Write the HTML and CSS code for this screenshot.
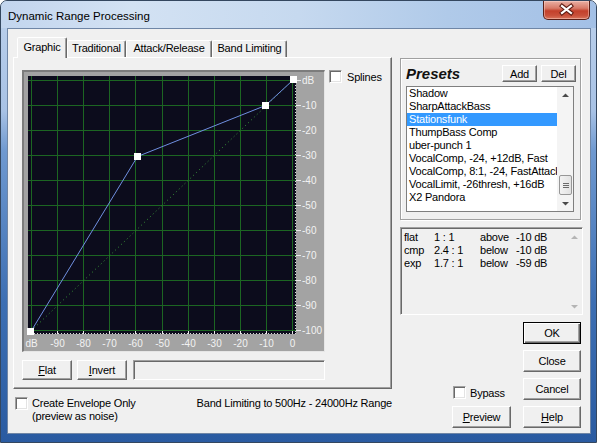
FILE: index.html
```html
<!DOCTYPE html>
<html>
<head>
    <title>Dynamic Range Processing</title>
    <link rel="stylesheet" href="styles.css">
</head>
<body>
<div class="window">
    <div class="titlebar">
        <div class="title">Dynamic Range Processing</div>
        <div class="close-btn">
            <svg width="45" height="17" viewBox="0 0 45 17">
                <path d="M18 5 L27 12 M27 5 L18 12" stroke="#5e1b12" stroke-width="4.2" stroke-linecap="square"/>
                <path d="M18 5 L27 12 M27 5 L18 12" stroke="#fff" stroke-width="2.2" stroke-linecap="square"/>
            </svg>
        </div>
    </div>
    <div class="frame">
        <div class="client">
            <div class="left">
                <div class="tabs">
                    <div class="tab active tab-graphic">Graphic</div>
                    <div class="tab tab-trad">Traditional</div>
                    <div class="tab tab-attack">Attack/Release</div>
                    <div class="tab tab-band">Band Limiting</div>
                </div>
                <div class="tab-panel">
                    <div class="graph-row">
                        <div class="graph">
                            <svg class="plot" width="300" height="279" viewBox="0 0 300 279">
                                <rect x="4" y="4" width="268" height="258" fill="#0c0c1c"/>
                                <!-- grid -->
                                <path stroke="#1c6622" stroke-width="1" fill="none"
                                      d="M7.5 4V262M33.5 4V262M59.5 4V262M85.5 4V262M111.5 4V262M138.5 4V262M164.5 4V262M190.5 4V262M216.5 4V262M242.5 4V262M268.5 4V262
                                         M4 8.5H272M4 33.5H272M4 58.5H272M4 83.5H272M4 108.5H272M4 133.5H272M4 158.5H272M4 183.5H272M4 208.5H272M4 233.5H272M4 258.5H272"/>
                                <!-- unity line -->
                                <path d="M7.5 258.5 L268.5 8.5" stroke="#3a9a3a" stroke-width="1" stroke-dasharray="1 3" fill="none"/>
                                <!-- scale ticks -->
                                <path d="M4 261.5H272M271.5 4V262" stroke="#d8d8d8" stroke-width="1" stroke-dasharray="1 2" fill="none"/>
                                <path stroke="#e8e8e8" stroke-width="1" fill="none"
                                      d="M7.5 259V262M33.5 259V262M59.5 259V262M85.5 259V262M111.5 259V262M138.5 259V262M164.5 259V262M190.5 259V262M216.5 259V262M242.5 259V262M268.5 259V262
                                         M272 8.5H277M272 33.5H277M272 58.5H277M272 83.5H277M272 108.5H277M272 133.5H277M272 158.5H277M272 183.5H277M272 208.5H277M272 233.5H277M272 258.5H277"/>
                                <!-- curve -->
                                <polyline points="7.5,258.5 113.5,84.5 241.5,33.5 268.5,8.5" stroke="#6f8fe0" stroke-width="1" fill="none"/>
                                <g fill="#fff">
                                    <rect x="3" y="256" width="7" height="7"/>
                                    <rect x="110" y="81" width="7" height="7"/>
                                    <rect x="238" y="30" width="7" height="7"/>
                                    <rect x="266" y="4" width="7" height="7"/>
                                </g>
                                <g class="axis-bottom" text-anchor="middle">
                                    <text x="7.5" y="275">dB</text>
                                    <text x="33.5" y="275">-90</text>
                                    <text x="59.5" y="275">-80</text>
                                    <text x="85.5" y="275">-70</text>
                                    <text x="111.5" y="275">-60</text>
                                    <text x="138.5" y="275">-50</text>
                                    <text x="164.5" y="275">-40</text>
                                    <text x="190.5" y="275">-30</text>
                                    <text x="216.5" y="275">-20</text>
                                    <text x="242.5" y="275">-10</text>
                                    <text x="268.5" y="275">0</text>
                                </g>
                                <g class="axis-right">
                                    <text x="278" y="12">dB</text>
                                    <text x="278" y="37">-10</text>
                                    <text x="278" y="62">-20</text>
                                    <text x="278" y="87">-30</text>
                                    <text x="278" y="112">-40</text>
                                    <text x="278" y="137">-50</text>
                                    <text x="278" y="162">-60</text>
                                    <text x="278" y="187">-70</text>
                                    <text x="278" y="212">-80</text>
                                    <text x="278" y="237">-90</text>
                                    <text x="278" y="262">-100</text>
                                </g>
                            </svg>
                        </div>
                        <div class="check splines">
                            <span class="box"></span>
                            <span>Splines</span>
                        </div>
                    </div>
                    <div class="graph-buttons">
                        <button class="btn btn-flat"><u>F</u>lat</button>
                        <button class="btn btn-invert"><u>I</u>nvert</button>
                        <div class="field"></div>
                    </div>
                </div>
                <div class="bottom-row">
                    <div class="check envelope">
                        <span class="box"></span>
                        <span class="envelope-text">Create Envelope Only<br>(preview as noise)</span>
                    </div>
                    <div class="band-text">Band Limiting to 500Hz - 24000Hz Range</div>
                </div>
            </div>

            <div class="right">
                <div class="presets">
                    <div class="presets-head">
                        <div class="presets-title">Presets</div>
                        <button class="btn small-btn">Add</button>
                        <button class="btn small-btn">Del</button>
                    </div>
                    <div class="listbox">
                        <div class="items">
                            <div class="item">Shadow</div>
                            <div class="item">SharpAttackBass</div>
                            <div class="item sel">Stationsfunk</div>
                            <div class="item">ThumpBass Comp</div>
                            <div class="item">uber-punch 1</div>
                            <div class="item">VocalComp, -24, +12dB, Fast</div>
                            <div class="item">VocalComp, 8:1, -24, FastAttack</div>
                            <div class="item">VocalLimit, -26thresh, +16dB</div>
                            <div class="item">X2 Pandora</div>
                        </div>
                        <div class="scroll">
                            <svg class="arrow" width="16" height="16"><polygon points="5,10 12,10 8.5,6.5" fill="#4a4a4a"/></svg>
                            <div class="track">
                                <div class="thumb"><span></span><span></span><span></span></div>
                            </div>
                            <svg class="arrow" width="16" height="16"><polygon points="5,7 12,7 8.5,10.5" fill="#4a4a4a"/></svg>
                        </div>
                    </div>
                </div>

                <div class="info">
                    <div class="info-text">
                        <span>flat</span><span>1 : 1</span><span>above</span><span>-10 dB</span>
                        <span>cmp</span><span>2.4 : 1</span><span>below</span><span>-10 dB</span>
                        <span>exp</span><span>1.7 : 1</span><span>below</span><span>-59 dB</span>
                    </div>
                    <div class="scroll">
                        <svg class="arrow" width="16" height="16"><polygon points="5,10 12,10 8.5,6.5" fill="#b4b4b4"/></svg>
                        <div class="track"></div>
                        <svg class="arrow" width="16" height="16"><polygon points="5,7 12,7 8.5,10.5" fill="#b4b4b4"/></svg>
                    </div>
                </div>

                <div class="actions">
                    <div class="actions-left">
                        <div class="check bypass">
                            <span class="box"></span>
                            <span>Bypass</span>
                        </div>
                        <button class="btn btn-preview"><u>P</u>review</button>
                    </div>
                    <div class="actions-right">
                        <button class="btn btn-side default">OK</button>
                        <button class="btn btn-side">Close</button>
                        <button class="btn btn-side">Cancel</button>
                        <button class="btn btn-side"><u>H</u>elp</button>
                    </div>
                </div>
            </div>
        </div>
    </div>
</div>
</body>
</html>
```

FILE: styles.css
```css
* {
    box-sizing: border-box;
}
body {
    margin: 0;
    width: 597px;
    height: 443px;
    overflow: hidden;
    background: #fff;
    font-family: "Liberation Sans", Arial, sans-serif;
    font-size: 11px;
    letter-spacing: -0.2px;
    color: #000;
}

/* window chrome */
.window {
    width: 597px;
    height: 443px;
    display: flex;
    flex-direction: column;
    border: 1px solid #34475f;
    border-radius: 7px 7px 0 0;
    background: linear-gradient(to bottom, #bcd1ec 0, #a8c2e5 110px, #6f99d0 150px, #3d6fb3 300px, #2a5ba1 100%);
}
.titlebar {
    height: 27px;
    display: flex;
    align-items: flex-start;
    padding: 0 6px 0 7px;
    border-radius: 6px 6px 0 0;
    background: linear-gradient(90deg, #c2d5ee 0, #d3e2f3 22%, #c6d9ef 50%, #b0cae9 75%, #a3c0e6 100%);
}
.title {
    flex: 1;
    padding-top: 8px;
    font-size: 11.5px;
    line-height: 14px;
    letter-spacing: 0;
}
.close-btn {
    width: 47px;
    height: 19px;
    border: 1px solid #5a1f17;
    border-top: none;
    border-radius: 0 0 5px 5px;
    background: linear-gradient(#e9b0a4 0, #d77a68 40%, #c3402b 55%, #c9503a 80%, #d8745c 100%);
    box-shadow: inset 0 0 0 1px rgba(255, 220, 210, 0.45);
}
.close-btn svg {
    display: block;
}
.frame {
    flex: 1;
    display: flex;
    padding: 0 5px 8px 6px;
}
.client {
    flex: 1;
    display: flex;
    border: 1px solid #6f86a6;
    background: #f0f0f0;
}

/* left side */
.left {
    width: 379px;
    margin-left: 5px;
    padding-top: 8px;
}
.tabs {
    display: flex;
    align-items: flex-end;
    height: 20px;
    padding-left: 4px;
    position: relative;
    z-index: 1;
}
.tab {
    height: 17px;
    border: 1px solid;
    border-bottom: 0;
    border-color: #fff #696969 transparent #fff;
    box-shadow: inset -1px 0 #a0a0a0;
    border-radius: 2px 2px 0 0;
    background: #f0f0f0;
    text-align: center;
    line-height: 15px;
    white-space: nowrap;
}
.tab.active {
    height: 21px;
    margin-bottom: -1px;
    padding-top: 2px;
}
.tab-graphic { width: 50px; }
.tab-trad { width: 59px; }
.tab-attack { width: 86px; }
.tab-band { width: 75px; }

.tab-panel {
    height: 332px;
    border: 1px solid;
    border-color: #fff #696969 #696969 #fff;
    box-shadow: inset -1px -1px #a0a0a0;
    padding: 12px 0 0 8px;
}
.graph-row {
    display: flex;
    align-items: flex-start;
}
.graph {
    width: 303px;
    height: 282px;
    border-style: solid;
    border-width: 2px 1px 1px 2px;
    border-color: #7c7c7c #e6e6e6 #e6e6e6 #7c7c7c;
    background: #a3a3a3;
}
.plot {
    display: block;
    font-family: "Liberation Sans", Arial, sans-serif;
    font-size: 10px;
    letter-spacing: 0;
    fill: #f2f2f2;
}

.check {
    display: flex;
    align-items: center;
    gap: 5px;
}
.box {
    width: 13px;
    height: 13px;
    flex: none;
    background: #fff;
    border: 1px solid;
    border-color: #a0a0a0 #fff #fff #a0a0a0;
    box-shadow: inset 1px 1px #696969, inset -1px -1px #e3e3e3;
}
.splines {
    margin-left: 4px;
}

.graph-buttons {
    display: flex;
    margin-top: 8px;
}
.btn {
    display: flex;
    align-items: center;
    justify-content: center;
    padding: 0;
    margin: 0;
    font: inherit;
    letter-spacing: inherit;
    color: #000;
    background: #f0f0f0;
    border: 1px solid;
    border-color: #fff #696969 #696969 #fff;
    box-shadow: inset -1px -1px #a0a0a0;
}
.btn u {
    text-decoration: underline;
}
.btn-flat {
    width: 50px;
    height: 20px;
    margin-right: 5px;
}
.btn-invert {
    width: 50px;
    height: 20px;
    margin-right: 6px;
}
.field {
    width: 192px;
    height: 20px;
    border: 1px solid;
    border-color: #a0a0a0 #fff #fff #a0a0a0;
    box-shadow: inset 1px 1px #696969;
}

.bottom-row {
    display: flex;
    margin-top: 8px;
    line-height: 13px;
}
.envelope {
    width: 185px;
    align-items: flex-start;
    gap: 4px;
    padding-left: 2px;
}
.band-text {
    white-space: nowrap;
}

/* right side */
.right {
    width: 183px;
    margin-left: 8px;
    padding-top: 29px;
    display: flex;
    flex-direction: column;
}
.presets {
    height: 162px;
    width: 181px;
    border: 1px solid #a0a0a0;
    box-shadow: inset 1px 1px #fff, 1px 1px #fff;
    padding: 6px 4px 0 5px;
}
.presets-head {
    display: flex;
    align-items: center;
    height: 17px;
}
.presets-title {
    flex: 1;
    font-size: 15px;
    font-weight: bold;
    font-style: italic;
    letter-spacing: 0;
    color: #111;
}
.small-btn {
    width: 35px;
    height: 17px;
    margin-left: 4px;
}
.listbox {
    display: flex;
    width: 168px;
    height: 126px;
    margin-top: 4px;
    border: 1px solid #7f7f7f;
    background: #fff;
}
.items {
    flex: 1;
    overflow: hidden;
}
.item {
    height: 13px;
    line-height: 13px;
    padding-left: 2px;
    white-space: nowrap;
    overflow: hidden;
}
.item.sel {
    background: #3399ff;
    color: #fff;
}
.scroll {
    width: 16px;
    display: flex;
    flex-direction: column;
    background: #f4f4f4;
}
.arrow {
    display: block;
    flex: none;
}
.track {
    flex: 1;
}
.listbox .track {
    padding-top: 72px;
}
.thumb {
    width: 13px;
    height: 20px;
    margin-left: 2px;
    border: 1px solid #979797;
    border-radius: 2px;
    background: linear-gradient(90deg, #f3f3f3, #e2e2e2);
    display: flex;
    flex-direction: column;
    justify-content: center;
    align-items: center;
    gap: 1px;
}
.thumb span {
    display: block;
    width: 6px;
    height: 1px;
    background: #6a6a6a;
}

.info {
    display: flex;
    height: 88px;
    margin-top: 7px;
    border: 1px solid;
    border-color: #a0a0a0 #fff #fff #a0a0a0;
    box-shadow: inset 1px 1px #696969;
    padding: 1px 0 0 1px;
}
.info .scroll {
    background: #f0f0f0;
}
.info-text {
    flex: 1;
    display: grid;
    grid-template-columns: 30px 46px 36px auto;
    grid-auto-rows: 13px;
    line-height: 13px;
    padding: 2px 0 0 2px;
    align-content: start;
}

.actions {
    display: flex;
    margin-top: 7px;
}
.actions-left {
    width: 59px;
    margin-left: 52px;
    display: flex;
    flex-direction: column;
    justify-content: flex-end;
}
.bypass {
    gap: 4px;
    margin-left: 1px;
    margin-bottom: 7px;
}
.btn-preview {
    width: 59px;
    height: 22px;
}
.actions-right {
    margin-left: 12px;
    display: flex;
    flex-direction: column;
    gap: 6px;
}
.btn-side {
    width: 58px;
    height: 22px;
}
.btn.default {
    border: 1px solid #000;
    box-shadow: inset 1px 1px #fff, inset -1px -1px #696969, inset -2px -2px #a0a0a0;
}
```
